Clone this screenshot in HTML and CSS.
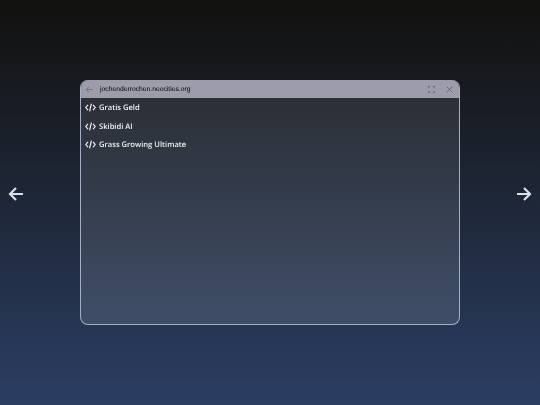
FILE: index.html
```html
<!DOCTYPE html>
<html lang="en">
<head>
<meta charset="utf-8">
<title>jochenderrochen.neocities.org</title>
<link rel="stylesheet" href="styles.css">
</head>
<body>
<main class="stage">
  <button class="nav nav-left" aria-label="Previous">
    <svg viewBox="0 0 16 16" class="nav-icon"><path d="M15 8H2M8 2L2 8l6 6"/></svg>
  </button>
  <section class="window">
    <header class="titlebar">
      <svg viewBox="0 0 10 10" class="back"><path d="M9 5H1.5M4.5 2L1.5 5l3 3"/></svg>
      <span class="url">jochenderrochen.neocities.org</span>
      <svg viewBox="0 0 8 8" class="ctrl expand"><path d="M0.5 2.5V0.5H2.5M5.5 0.5H7.5V2.5M7.5 5.5V7.5H5.5M2.5 7.5H0.5V5.5"/></svg>
      <svg viewBox="0 0 8 8" class="ctrl close"><path d="M1 1l6 6M7 1L1 7"/></svg>
    </header>
    <ul class="list">
      <li class="item"><svg viewBox="0 0 12 10" class="code"><path d="M3.2 2L0.8 5l2.4 3M8.8 2l2.4 3-2.4 3M7 0.8L5 9.2"/></svg><span class="label">Gratis Geld</span></li>
      <li class="item"><svg viewBox="0 0 12 10" class="code"><path d="M3.2 2L0.8 5l2.4 3M8.8 2l2.4 3-2.4 3M7 0.8L5 9.2"/></svg><span class="label">Skibidi AI</span></li>
      <li class="item"><svg viewBox="0 0 12 10" class="code"><path d="M3.2 2L0.8 5l2.4 3M8.8 2l2.4 3-2.4 3M7 0.8L5 9.2"/></svg><span class="label">Grass Growing Ultimate</span></li>
    </ul>
  </section>
  <button class="nav nav-right" aria-label="Next">
    <svg viewBox="0 0 16 16" class="nav-icon"><path d="M1 8h13M8 2l6 6-6 6"/></svg>
  </button>
</main>
</body>
</html>
```
FILE: styles.css
```css
* { box-sizing: border-box; }
html, body { height: 100%; }
body {
  margin: 0;
  overflow: hidden;
  background: linear-gradient(180deg, #12110f 0%, #15171a 14%, #2b3e63 100%);
  font-family: "Open Sans", "Noto Sans", sans-serif;
  text-rendering: geometricPrecision;
}
.stage {
  height: 405px;
  display: flex;
  align-items: flex-start;
  justify-content: space-between;
  padding: 80px 8px 0 8px;
}
.nav {
  margin-top: 106px;
  width: 16px;
  height: 16px;
  padding: 0;
  border: 0;
  background: none;
  display: flex;
}
.nav-icon {
  width: 16px;
  height: 16px;
  fill: none;
  stroke: #d9deea;
  stroke-width: 2.2;
}
.window {
  width: 380px;
  height: 245px;
  display: flex;
  flex-direction: column;
  border: 1px solid #a4afc6;
  border-top: 0;
  border-radius: 8px;
  overflow: hidden;
  background: linear-gradient(180deg, #2a2d33 0%, #3f4e68 100%);
}
.titlebar {
  height: 18px;
  flex: none;
  display: flex;
  align-items: center;
  background: #9c9cab;
  padding: 0 6px 0 4px;
}
.back {
  width: 9px;
  height: 9px;
  fill: none;
  stroke: #74748a;
  stroke-width: 1;
}
.url {
  margin-left: 6px;
  flex: 1;
  font-family: "Liberation Sans", Arial, sans-serif;
  font-size: 6.75px;
  color: #000000;
  will-change: transform;
}
.ctrl {
  width: 7px;
  height: 7px;
  fill: none;
  stroke: #66667a;
  stroke-width: 1.1;
}
.close { margin-left: 11px; }
.list {
  list-style: none;
  margin: 0;
  padding: 0.5px 0 0 4px;
}
.item {
  height: 18.5px;
  display: flex;
  align-items: center;
  gap: 3px;
  font-size: 7.6px;
  font-weight: 600;
  color: #eef0f4;
}
.label {
  padding-top: 1px;
  will-change: transform;
}
.code {
  width: 11px;
  height: 9px;
  fill: none;
  stroke: #f2f4f8;
  stroke-width: 1.3;
}
```
